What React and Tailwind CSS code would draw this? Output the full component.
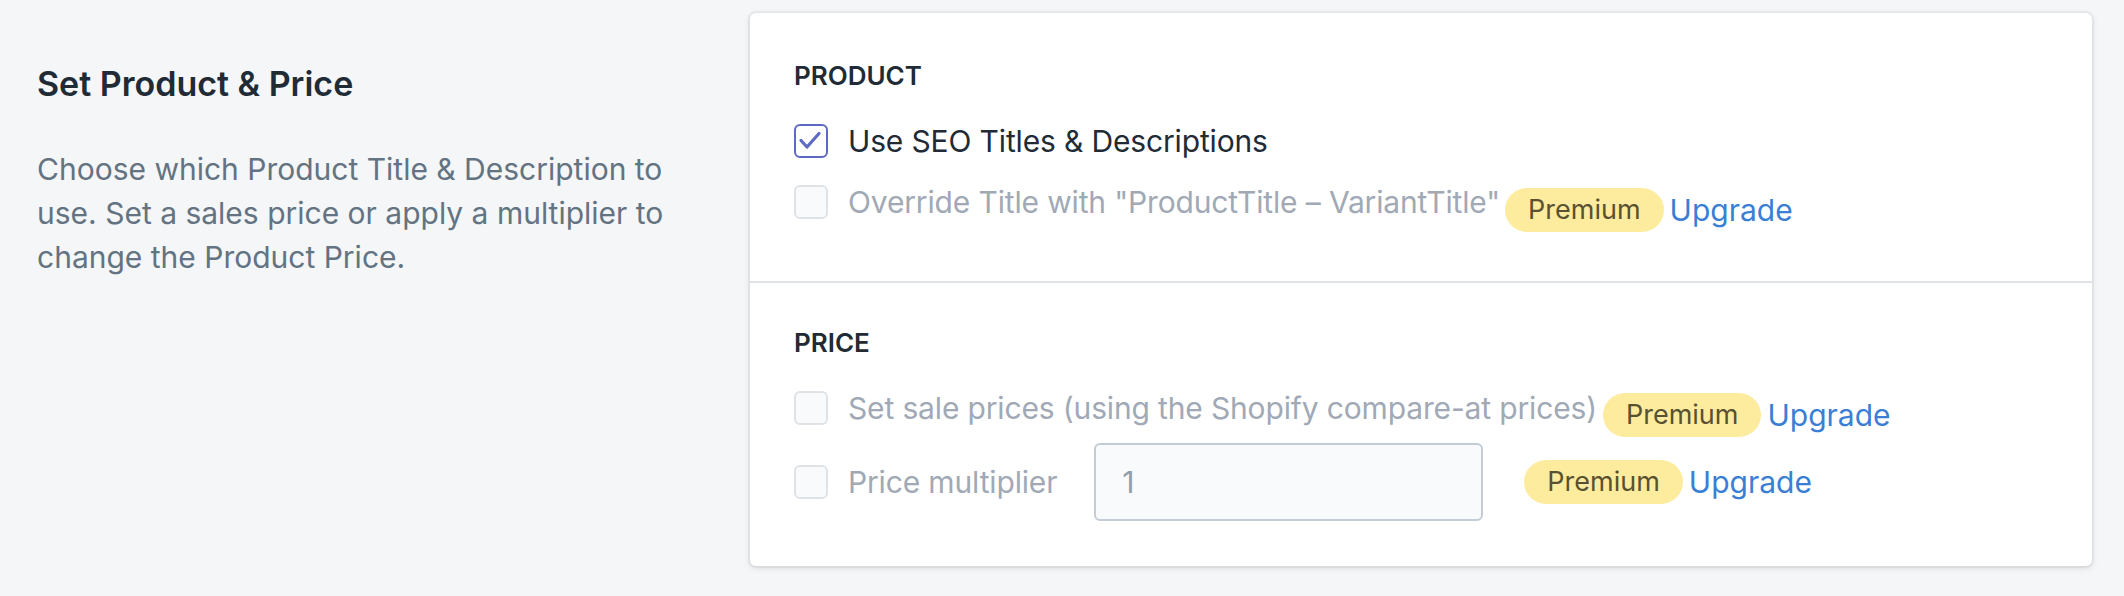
import React from 'react';

const Checkbox = ({ checked = false }) => (
  <span
    className={`flex h-[34px] w-[34px] shrink-0 items-center justify-center rounded-[6px] border-2 ${
      checked ? 'border-[#5c6ac4] bg-white' : 'border-[#dfe3e8] bg-[#f9fafb]'
    }`}
  >
    {checked && (
      <svg viewBox="0 0 30 30" className="h-[30px] w-[30px]">
        <polyline
          points="5,14.5 11,21 23,7.5"
          fill="none"
          stroke="#5c6ac4"
          strokeWidth="3.2"
          strokeLinecap="round"
          strokeLinejoin="round"
        />
      </svg>
    )}
  </span>
);

const Premium = ({ className = '' }) => (
  <span className={`flex shrink-0 items-center gap-[6px] ${className}`}>
    <span className="flex h-[44px] items-center rounded-full bg-[#fdeb9e] px-[23px] text-[27px] text-[#595130]">
      Premium
    </span>
    <a href="#" className="text-[30px] leading-[44px] text-[#3a7fd5]">
      Upgrade
    </a>
  </span>
);

const Subheading = ({ children }) => (
  <h3 className="text-[26px] font-semibold uppercase leading-[32px] text-[#212b36]">{children}</h3>
);

const label = 'ml-[20px] whitespace-nowrap text-[30px] leading-[44px] tracking-[-0.15px]';

export default function App() {
  return (
    <div className="flex h-[596px] w-full bg-[#f4f6f8] font-['Inter',sans-serif] antialiased">
      {/* annotation */}
      <div className="w-[750px] shrink-0 pl-[37px] pt-[64px]">
        <h2 className="text-[34px] font-semibold leading-[40px] text-[#212b36]">Set Product &amp; Price</h2>
        <p className="mt-[43px] text-[30px] leading-[44px] text-[#637381]">
          Choose which Product Title &amp; Description to
          <br />
          use. Set a sales price or apply a multiplier to
          <br />
          change the Product Price.
        </p>
      </div>

      {/* card */}
      <div className="mt-[13px] h-[553px] w-[1342px] shrink-0 rounded-[6px] bg-white shadow-[0_0_0_2px_rgba(63,63,68,0.05),0_2px_6px_0_rgba(63,63,68,0.15)]">
        <div className="px-[44px] pb-[57px] pt-[47px]">
          <Subheading>Product</Subheading>
          <div className="mt-[27px] flex h-[44px] items-center">
            <Checkbox checked />
            <span className={`${label} text-[#212b36]`}>Use SEO Titles &amp; Descriptions</span>
          </div>
          <div className="mt-[17px] flex h-[44px] items-center">
            <Checkbox />
            <span className={`${label} text-[#a0a9b5]`}>Override Title with "ProductTitle – VariantTitle"</span>
            <Premium className="ml-[5px] mt-[16px]" />
          </div>
        </div>

        <div className="border-t-2 border-[#dfe3e8] px-[44px] pb-[45px] pt-[44px]">
          <Subheading>Price</Subheading>
          <div className="mt-[27px] flex h-[44px] items-center">
            <Checkbox />
            <span className={`${label} text-[#a0a9b5]`}>Set sale prices (using the Shopify compare-at prices)</span>
            <Premium className="ml-[6px] mt-[14px]" />
          </div>
          <div className="mt-[13px] flex h-[78px] items-center">
            <Checkbox />
            <span className={`${label} text-[#a0a9b5]`}>Price multiplier</span>
            <input
              disabled
              readOnly
              value="1"
              className="ml-[37px] h-[78px] w-[389px] shrink-0 rounded-[6px] border-2 border-[#c4cdd5] bg-[#f9fafb] pl-[26px] text-[30px] text-[#919eab]"
            />
            <Premium className="ml-[41px]" />
          </div>
        </div>
      </div>
    </div>
  );
}
